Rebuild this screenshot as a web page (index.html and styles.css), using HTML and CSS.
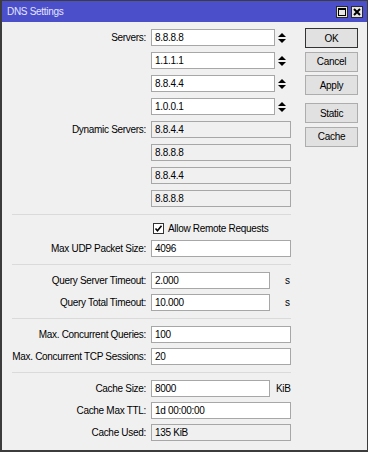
FILE: index.html
```html
<!DOCTYPE html>
<html>
<head>
<meta charset="utf-8">
<link rel="stylesheet" href="styles.css">
</head>
<body>
<div class="window">
  <div class="titlebar">
    <span class="title">DNS Settings</span>
    <div class="tb-buttons">
      <span class="tb-btn"><svg width="10" height="10" viewBox="0 0 10 10"><rect x="1.5" y="1.5" width="7" height="7" fill="none" stroke="#000"/><rect x="1" y="1" width="8" height="2" fill="#000"/></svg></span>
      <span class="tb-btn"><svg width="10" height="10" viewBox="0 0 10 10"><path d="M2 2 L8 8 M8 2 L2 8" stroke="#000" stroke-width="2"/></svg></span>
    </div>
  </div>
  <div class="content">
    <div class="form">
      <div class="section s1">
        <div class="row"><span class="lbl">Servers:</span><span class="box w-srv">8.8.8.8</span><svg class="spin" width="8" height="10" viewBox="0 0 8 10"><path d="M4 0 L8 4 H0 Z M0 6 H8 L4 10 Z" fill="#000"/></svg></div>
        <div class="row"><span class="lbl"></span><span class="box w-srv">1.1.1.1</span><svg class="spin" width="8" height="10" viewBox="0 0 8 10"><path d="M4 0 L8 4 H0 Z M0 6 H8 L4 10 Z" fill="#000"/></svg></div>
        <div class="row"><span class="lbl"></span><span class="box w-srv">8.8.4.4</span><svg class="spin" width="8" height="10" viewBox="0 0 8 10"><path d="M4 0 L8 4 H0 Z M0 6 H8 L4 10 Z" fill="#000"/></svg></div>
        <div class="row"><span class="lbl"></span><span class="box w-srv">1.0.0.1</span><svg class="spin" width="8" height="10" viewBox="0 0 8 10"><path d="M4 0 L8 4 H0 Z M0 6 H8 L4 10 Z" fill="#000"/></svg></div>
        <div class="row"><span class="lbl">Dynamic Servers:</span><span class="box w-full ro">8.8.4.4</span></div>
        <div class="row"><span class="lbl"></span><span class="box w-full ro">8.8.8.8</span></div>
        <div class="row"><span class="lbl"></span><span class="box w-full ro">8.8.4.4</span></div>
        <div class="row"><span class="lbl"></span><span class="box w-full ro">8.8.8.8</span></div>
      </div>
      <div class="sep"></div>
      <div class="section s2">
        <div class="row chkrow"><span class="lbl"></span><span class="chk"><svg width="9" height="9" viewBox="0 0 9 9"><path d="M1.5 4.5 L3.5 6.8 L7.5 1.8" fill="none" stroke="#000" stroke-width="1.6"/></svg></span><span class="chktext">Allow Remote Requests</span></div>
        <div class="row"><span class="lbl">Max UDP Packet Size:</span><span class="box w-full">4096</span></div>
      </div>
      <div class="sep"></div>
      <div class="section">
        <div class="row"><span class="lbl">Query Server Timeout:</span><span class="box w-short">2.000</span><span class="unit u-s">s</span></div>
        <div class="row"><span class="lbl">Query Total Timeout:</span><span class="box w-short">10.000</span><span class="unit u-s">s</span></div>
      </div>
      <div class="sep"></div>
      <div class="section">
        <div class="row"><span class="lbl">Max. Concurrent Queries:</span><span class="box w-full">100</span></div>
        <div class="row"><span class="lbl">Max. Concurrent TCP Sessions:</span><span class="box w-full">20</span></div>
      </div>
      <div class="sep"></div>
      <div class="section">
        <div class="row"><span class="lbl">Cache Size:</span><span class="box w-short">8000</span><span class="unit u-kib">KiB</span></div>
        <div class="row"><span class="lbl">Cache Max TTL:</span><span class="box w-full">1d 00:00:00</span></div>
        <div class="row"><span class="lbl">Cache Used:</span><span class="box w-full ro">135 KiB</span></div>
      </div>
    </div>
    <div class="buttons">
      <span class="btn default">OK</span>
      <span class="btn">Cancel</span>
      <span class="btn">Apply</span>
      <span class="btn gap">Static</span>
      <span class="btn">Cache</span>
    </div>
  </div>
</div>
</body>
</html>
```
FILE: styles.css
```css
* { box-sizing: border-box; }
html, body { margin: 0; padding: 0; background: #f0f0f0; }
body {
  font-family: "Liberation Sans", Arial, sans-serif;
  font-size: 10px;
  letter-spacing: -0.3px;
  color: #000;
}
.window {
  width: 368px;
  height: 452px;
  border-top: 1px solid #3c3c3c;
  border-left: 2px solid #3c3c3c;
  border-right: 1px solid #3c3c3c;
  border-bottom: 2px solid #3c3c3c;
  background: #f0f0f0;
  display: flex;
  flex-direction: column;
}
.titlebar {
  height: 21px;
  background: #4b4fc9;
  display: flex;
  align-items: center;
  padding-left: 5px;
  padding-right: 4px;
}
.title {
  color: #e4e4ff;
  font-size: 10px;
  flex: 1;
}
.tb-buttons { display: flex; gap: 3px; }
.tb-btn {
  width: 12px;
  height: 12px;
  background: #e6e6e6;
  border: 1px solid #2a2a2a;
  display: flex;
  align-items: center;
  justify-content: center;
}
.content {
  display: flex;
  align-items: flex-start;
}
.form { width: 289px; }
.section {
  display: flex;
  flex-direction: column;
  gap: 5px;
  padding: 7px 0;
}
.section.s1 { gap: 6px; padding-top: 7px; padding-bottom: 7px; }
.section.s2 { gap: 6px; padding-top: 7px; }
.sep {
  height: 1px;
  margin-left: 10px;
  background: #dadada;
}
.row {
  display: flex;
  align-items: center;
  height: 17px;
}
.row.chkrow { height: 12px; }
.lbl {
  width: 144px;
  margin-right: 5px;
  text-align: right;
  white-space: nowrap;
  flex-shrink: 0;
}
.box {
  height: 17px;
  line-height: 15px;
  border: 1px solid #a7a7a7;
  background: #fff;
  padding-left: 3px;
  white-space: nowrap;
  flex-shrink: 0;
}
.box.ro { background: #f0f0f0; }
.w-srv { width: 124px; }
.w-full { width: 140px; }
.w-short { width: 119px; }
.spin { margin-left: 3px; }
.unit { line-height: 17px; }
.u-s { margin-left: 15px; }
.u-kib { margin-left: 6px; }
.chk {
  width: 11px;
  height: 11px;
  margin-left: 2px;
  border: 1px solid #333;
  background: #fff;
  display: flex;
  align-items: center;
  justify-content: center;
}
.chktext { margin-left: 4px; }
.buttons {
  margin-left: 14px;
  padding-top: 6px;
  display: flex;
  flex-direction: column;
  gap: 3.5px;
}
.btn {
  width: 53px;
  height: 20px;
  border: 1px solid #adadad;
  background: #e1e1e1;
  display: flex;
  align-items: center;
  justify-content: center;
}
.btn.default { border-color: #333; }
.btn.gap { margin-top: 4.5px; }
```
